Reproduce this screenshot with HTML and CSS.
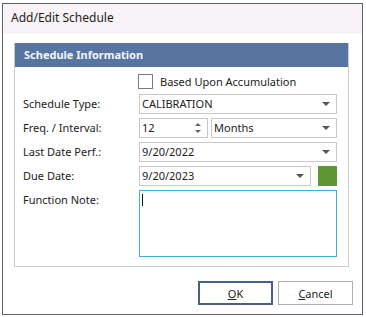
FILE: index.html
```html
<!doctype html>
<html lang="en">
<head>
  <meta charset="utf-8">
  <title>Add/Edit Schedule</title>
  <link rel="stylesheet" href="styles.css">
</head>
<body class="app">
  <div class="dialog">
    <div class="titlebar">Add/Edit Schedule</div>

    <div class="group">
      <div class="group-header">Schedule Information</div>
      <div class="form">
        <div class="label"></div>
        <label class="check-row">
          <span class="checkbox"></span>
          <span>Based Upon Accumulation</span>
        </label>

        <div class="label">Schedule Type:</div>
        <div class="combo">
          <span class="combo-text">CALIBRATION</span>
          <span class="arrow"></span>
        </div>

        <div class="label">Freq. / Interval:</div>
        <div class="field-pair">
          <div class="spin">
            <span class="combo-text">12</span>
            <span class="spin-buttons">
              <span class="tri-up"></span>
              <span class="tri-down"></span>
            </span>
          </div>
          <div class="combo expand">
            <span class="combo-text">Months</span>
            <span class="arrow"></span>
          </div>
        </div>

        <div class="label">Last Date Perf.:</div>
        <div class="combo">
          <span class="combo-text">9/20/2022</span>
          <span class="arrow"></span>
        </div>

        <div class="label">Due Date:</div>
        <div class="field-pair">
          <div class="combo expand">
            <span class="combo-text">9/20/2023</span>
            <span class="arrow"></span>
          </div>
          <div class="swatch"></div>
        </div>

        <div class="label">Function Note:</div>
        <div class="note"><span class="caret"></span></div>
      </div>
    </div>

    <div class="buttons">
      <button class="btn btn-default"><u>O</u>K</button>
      <button class="btn"><u>C</u>ancel</button>
    </div>
  </div>
</body>
</html>
```

FILE: styles.css
```css
.app {
  margin: 0;
  padding: 0;
  background: #ffffff;
  font-family: 'Noto Sans', sans-serif;
  font-size: 11px;
  color: #222222;
}

.dialog {
  margin: 3px 0 0 2px;
  width: 359px;
  height: 310px;
  border: 1px solid #5c6272;
  background: #ffffff;
  display: flex;
  flex-direction: column;
}

.titlebar {
  height: 30px;
  line-height: 28px;
  padding-left: 8px;
  background: #f7f3f6;
  font-size: 12px;
  color: #1e1e1e;
}

.group {
  margin: 9px 0 0 11px;
  width: 333px;
  border: 1px solid #cccccc;
  border-top: 0;
}

.group-header {
  height: 24px;
  line-height: 24px;
  padding-left: 9px;
  background: #5874a0;
  color: #f4f6fa;
  font-weight: bold;
}

.form {
  display: grid;
  grid-template-columns: 116px 198px;
  grid-auto-rows: 20px;
  row-gap: 4px;
  padding: 3px 0 8px 8px;
}

.label {
  line-height: 20px;
}

.check-row {
  display: flex;
  align-items: center;
  gap: 7px;
  padding-top: 2px;
}

.checkbox {
  width: 13px;
  height: 13px;
  border: 1px solid #7a7a7a;
  background: #ffffff;
  margin-left: -1px;
}

.combo,
.spin {
  display: flex;
  align-items: center;
  border: 1px solid #c8c8c8;
  background: #ffffff;
  box-sizing: border-box;
  height: 20px;
}

.combo-text {
  flex: 1 1 auto;
  padding-left: 2px;
  line-height: 18px;
}

.arrow {
  width: 0;
  height: 0;
  margin-right: 6px;
  border-left: 4px solid transparent;
  border-right: 4px solid transparent;
  border-top: 4px solid #555555;
}

.field-pair {
  display: flex;
  gap: 3px;
}

.expand {
  flex: 1 1 auto;
}

.spin {
  width: 69px;
}

.spin-buttons {
  display: flex;
  flex-direction: column;
  gap: 4px;
  margin-right: 6px;
}

.tri-up {
  border-left: 3px solid transparent;
  border-right: 3px solid transparent;
  border-bottom: 3px solid #666666;
}

.tri-down {
  border-left: 3px solid transparent;
  border-right: 3px solid transparent;
  border-top: 3px solid #666666;
}

.swatch {
  width: 19px;
  flex: 0 0 19px;
  background: #5d9632;
  margin-left: 4px;
}

.note {
  grid-row: span 3;
  height: 67px;
  box-sizing: border-box;
  border: 1px solid #3fb1d6;
  padding: 3px 0 0 2px;
}

.caret {
  display: block;
  width: 1px;
  height: 12px;
  background: #111111;
}

.buttons {
  display: flex;
  justify-content: flex-end;
  gap: 5px;
  padding: 14px 9px 0 0;
}

.btn {
  width: 75px;
  height: 24px;
  border: 1px solid #adadad;
  background: #ffffff;
  font-family: 'Noto Sans', sans-serif;
  font-size: 11px;
  color: #222222;
  padding: 0;
}

.btn-default {
  border: 2px solid #4b5f82;
}
```
